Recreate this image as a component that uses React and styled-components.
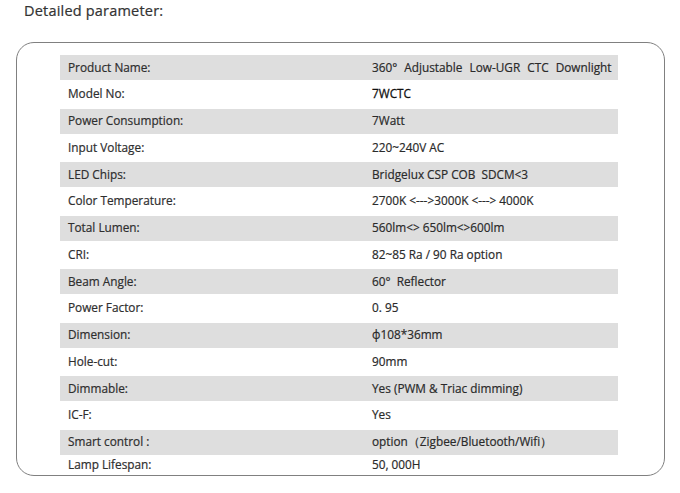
import React from 'react'
import styled, { createGlobalStyle } from 'styled-components';

const GlobalStyle = createGlobalStyle`
  body {
    margin: 0;
    background: #ffffff;
    font-family: "Open Sans", "Noto Sans", sans-serif;
    color: #333;
  }
`;

const Page = styled.div`
  width: 680px;
  height: 493px;
  overflow: hidden;
  background: #fff;
`;

const Heading = styled.h2`
  margin: 0;
  padding: 1px 0 0 24px;
  height: 42px;
  box-sizing: border-box;
  font-size: 14.5px;
  font-weight: 400;
  color: #333;
  letter-spacing: 0.2px;
  -webkit-text-stroke: 0.22px #333;
`;

const Card = styled.div`
  margin-left: 16px;
  width: 649px;
  height: 434px;
  box-sizing: border-box;
  border: 1.5px solid #808080;
  border-radius: 18px;
  padding: 12px 0 0 43px;
`;

const Table = styled.div`
  width: 558px;
  display: flex;
  flex-direction: column;
`;

const Row = styled.div`
  display: grid;
  grid-template-columns: 312px 1fr;
  align-items: center;
  height: ${p => (p.$shaded ? '25px' : '28.5px')};
  background: ${p => (p.$shaded ? '#dedede' : 'transparent')};
  font-size: 11.8px;
  line-height: 1;

  &:last-child {
    height: 21px;
  }
`;

const Label = styled.span`
  padding-left: 8px;
  color: #2e2e2e;
  -webkit-text-stroke: 0.2px #2e2e2e;
`;

const Value = styled.span`
  color: ${p => (p.$strong ? '#111' : '#2a2a2a')};
  -webkit-text-stroke: ${p => (p.$strong ? '0.28px' : '0.2px')} currentColor;
  word-spacing: ${p => p.$spaced || 0};
`;

const specs = [
  { label: 'Product Name:', value: '360° Adjustable Low-UGR CTC Downlight', spaced: '4px' },
  { label: 'Model No:', value: '7WCTC', strong: true },
  { label: 'Power Consumption:', value: '7Watt' },
  { label: 'Input Voltage:', value: '220~240V AC' },
  { label: 'LED Chips:', value: 'Bridgelux CSP COB  SDCM<3' },
  { label: 'Color Temperature:', value: '2700K <--->3000K <---> 4000K' },
  { label: 'Total Lumen:', value: '560lm<> 650lm<>600lm' },
  { label: 'CRI:', value: '82~85 Ra / 90 Ra option' },
  { label: 'Beam Angle:', value: '60°  Reflector' },
  { label: 'Power Factor:', value: '0. 95' },
  { label: 'Dimension:', value: 'ф108*36mm' },
  { label: 'Hole-cut:', value: '90mm' },
  { label: 'Dimmable:', value: 'Yes (PWM & Triac dimming)' },
  { label: 'IC-F:', value: 'Yes' },
  { label: 'Smart control :', value: 'option（Zigbee/Bluetooth/Wifi）' },
  { label: 'Lamp Lifespan:', value: '50, 000H' },
];

function App() {
  return (
    <Page>
      <GlobalStyle />
      <Heading>Detailed parameter:</Heading>
      <Card>
        <Table>
          {specs.map((s, i) => (
            <Row key={s.label} $shaded={i % 2 === 0}>
              <Label>{s.label}</Label>
              <Value $strong={s.strong} $spaced={s.spaced} style={{ whiteSpace: 'pre' }}>{s.value}</Value>
            </Row>
          ))}
        </Table>
      </Card>
    </Page>
  )
}

export default App
